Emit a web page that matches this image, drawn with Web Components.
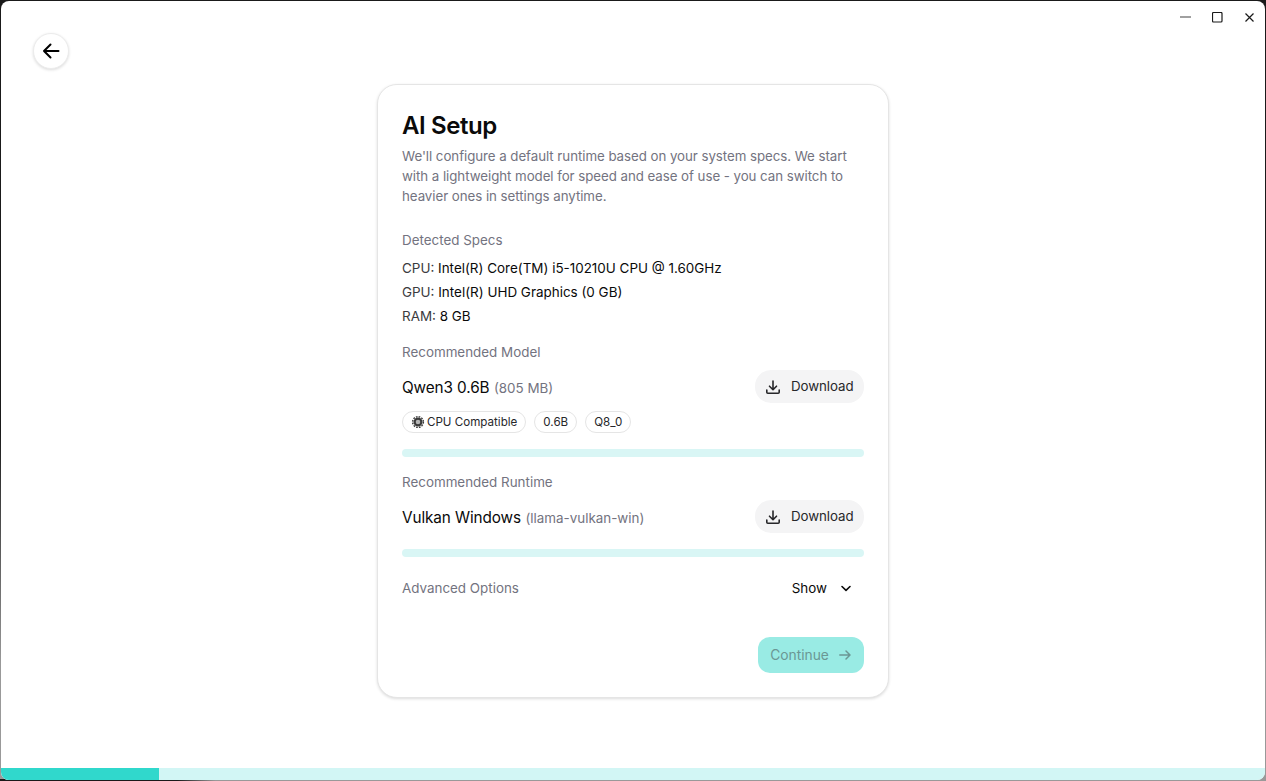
<!DOCTYPE html>
<html>
<head>
<meta charset="utf-8">
<title>AI Setup</title>
<style>
  html, body { margin: 0; height: 100%; overflow: hidden; }
  body {
    font-family: Inter, "Liberation Sans", sans-serif;
    background:
      linear-gradient(to right, #1a1a1a 14%, #999 17%) bottom / 100% 2px no-repeat,
      linear-gradient(#1a1a1a 55%, #999 85%);
  }
</style>
</head>
<body>
<app-window>
  <setup-card>
    <card-head title="AI Setup">We'll configure a default runtime based on your system specs. We start with a lightweight model for speed and ease of use - you can switch to heavier ones in settings anytime.</card-head>

    <section-label style="margin-top:24px">Detected Specs</section-label>
    <spec-line label="CPU:" style="margin-top:6px">Intel(R) Core(TM) i5-10210U CPU @ 1.60GHz</spec-line>
    <spec-line label="GPU:">Intel(R) UHD Graphics (0 GB)</spec-line>
    <spec-line label="RAM:">8 GB</spec-line>

    <section-label style="margin-top:14px">Recommended Model</section-label>
    <download-row name="Qwen3 0.6B" note="(805 MB)" style="margin-top:8px"></download-row>
    <chip-row>
      <info-chip icon>CPU Compatible</info-chip>
      <info-chip>0.6B</info-chip>
      <info-chip>Q8_0</info-chip>
    </chip-row>
    <thin-progress style="margin-top:16px"></thin-progress>

    <section-label style="margin-top:15px">Recommended Runtime</section-label>
    <download-row name="Vulkan Windows" note="(llama-vulkan-win)" style="margin-top:8px"></download-row>
    <thin-progress style="margin-top:16px"></thin-progress>

    <advanced-row></advanced-row>
    <continue-button></continue-button>
  </setup-card>
</app-window>

<script>
// Small helper so each element only declares its markup
function shadow(el, html) {
  el.attachShadow({ mode: 'open' })
  el.shadowRoot.innerHTML = html
}

class AppWindow extends HTMLElement {
  constructor() {
    super()
    shadow(this, `
      <style>
        :host {
          display: flex;
          flex-direction: column;
          box-sizing: border-box;
          height: 779px;
          margin: 1px 1px 0 1px;
          background: #fff;
          border-radius: 8px;
          overflow: hidden;
          position: relative;
          color: #0a0a0a;
        }
        .main {
          flex: 1;
          display: flex;
          justify-content: center;
          align-items: flex-start;
          padding: 83px 0 0 0;
        }
        .bar { height: 12px; background: #d2f6f5; }
        .bar div { width: 158px; height: 100%; background: #30d8cc; }
      </style>
      <window-controls></window-controls>
      <back-button></back-button>
      <div class="main"><slot></slot></div>
      <div class="bar"><div></div></div>
    `)
  }
}

class WindowControls extends HTMLElement {
  constructor() {
    super()
    shadow(this, `
      <style>
        :host { position: absolute; top: 11px; right: 10px; display: flex; gap: 21px; }
        svg { display: block; width: 11px; height: 11px; fill: none; stroke: #1a1a1a; stroke-width: 1; }
      </style>
      <svg viewBox="0 0 11 11"><path d="M0 5h11" stroke="#808080" stroke-width="1.4"/></svg>
      <svg viewBox="0 0 11 11"><rect x=".5" y=".5" width="9.500" height="9.500" rx="1" stroke-width="1.200"/></svg>
      <svg viewBox="0 0 11 11"><path d="M1.500 1.500l8 8M9.500 1.500l-8 8" stroke-width="1.200"/></svg>
    `)
  }
}

class BackButton extends HTMLElement {
  constructor() {
    super()
    shadow(this, `
      <style>
        :host {
          position: absolute;
          left: 32px;
          top: 32px;
          width: 36px;
          height: 36px;
          box-sizing: border-box;
          border-radius: 50%;
          border: 1px solid #ececec;
          background: #fff;
          box-shadow: 0 1px 3px rgba(0,0,0,.14);
          display: flex;
          align-items: center;
          justify-content: center;
        }
        svg { width: 20px; height: 20px; fill: none; stroke: #000; stroke-width: 2; stroke-linecap: round; stroke-linejoin: round; }
      </style>
      <svg viewBox="0 0 20 20"><path d="M17.500 10H3M9.500 3.500L3 10l6.500 6.500"/></svg>
    `)
  }
}

class SetupCard extends HTMLElement {
  constructor() {
    super()
    shadow(this, `
      <style>
        :host {
          display: flex;
          flex-direction: column;
          box-sizing: border-box;
          width: 512px;
          height: 614px;
          padding: 24px;
          background: #fff;
          border: 1px solid #e5e5e5;
          border-radius: 20px;
          box-shadow: 0 1px 3px rgba(0,0,0,.14);
        }
      </style>
      <slot></slot>
    `)
  }
}

class CardHead extends HTMLElement {
  constructor() {
    super()
    shadow(this, `
      <style>
        :host { display: block; padding-top: 1px; }
        h1 { margin: 0; font: 600 24px/32px Inter, sans-serif; letter-spacing: -.4px; }
        p { margin: 4px 0 0; font-size: 13.3px; line-height: 20px; color: #737380; letter-spacing: -.05px; }
      </style>
      <h1>${this.getAttribute('title')}</h1>
      <p><slot></slot></p>
    `)
  }
}

class SectionLabel extends HTMLElement {
  constructor() {
    super()
    shadow(this, `
      <style>
        :host { display: block; font-size: 13.4px; line-height: 20px; color: #737380; }
      </style>
      <slot></slot>
    `)
  }
}

class SpecLine extends HTMLElement {
  constructor() {
    super()
    shadow(this, `
      <style>
        :host { display: block; font-size: 13.450px; line-height: 24px; color: #0a0a0a; }
        span { color: #3b3b40; }
      </style>
      <span>${this.getAttribute('label')}</span> <slot></slot>
    `)
  }
}

class DownloadRow extends HTMLElement {
  constructor() {
    super()
    shadow(this, `
      <style>
        :host { display: flex; align-items: center; justify-content: space-between; height: 33px; }
        .name { font-size: 15.300px; letter-spacing: -.1px; }
        .note { font-size: 13.4px; color: #737380; }
        .btn {
          display: flex;
          align-items: center;
          gap: 10px;
          box-sizing: border-box;
          width: 109px;
          height: 33px;
          padding-left: 10px;
          border-radius: 16px;
          background: #f4f4f5;
          font-size: 13.3px;
          letter-spacing: -.05px;
          color: #27272a;
        }
        .btn span { position: relative; top: -1px; }
        svg { width: 16px; height: 16px; fill: none; stroke: #27272a; stroke-width: 1.600; stroke-linecap: round; stroke-linejoin: round; }
      </style>
      <div><span class="name">${this.getAttribute('name')}</span> <span class="note">${this.getAttribute('note')}</span></div>
      <div class="btn">
        <svg viewBox="0 0 16 16"><path d="M8 2v8.500M4.500 7.200L8 10.700l3.500-3.500M1.800 11v2.200c0 .6.4 1 1 1h10.400c.6 0 1-.4 1-1V11"/></svg>
        <span>Download</span>
      </div>
    `)
  }
}

class ChipRow extends HTMLElement {
  constructor() {
    super()
    shadow(this, `
      <style>
        :host { display: flex; gap: 8px; margin-top: 8px; }
      </style>
      <slot></slot>
    `)
  }
}

class InfoChip extends HTMLElement {
  constructor() {
    super()
    const icon = this.hasAttribute('icon') ? `
      <svg viewBox="0 0 14 14" fill="none" stroke="#3a3a3a">
        <circle cx="7" cy="7" r="3.400" fill="#b5b5b5" stroke-width="2.200"/>
        <circle cx="7" cy="7" r="5.400" stroke-width="1.400" stroke-dasharray="1.700 1.127"/>
      </svg>` : ''
    shadow(this, `
      <style>
        :host {
          display: flex;
          align-items: center;
          gap: 2px;
          box-sizing: border-box;
          height: 22px;
          padding: 0 8px;
          border: 1px solid #e5e5e5;
          border-radius: 11px;
          font-size: 11.600px;
          color: #27272a;
        }
        svg { width: 14px; height: 14px; }
      </style>
      ${icon}<slot></slot>
    `)
  }
}

class ThinProgress extends HTMLElement {
  constructor() {
    super()
    shadow(this, `
      <style>
        :host { display: block; height: 8px; border-radius: 4px; background: #d9f6f5; }
      </style>
    `)
  }
}

class AdvancedRow extends HTMLElement {
  constructor() {
    super()
    shadow(this, `
      <style>
        :host { display: flex; align-items: center; justify-content: space-between; margin-top: 21px; height: 20px; font-size: 13.4px; color: #737380; }
        .show { display: flex; align-items: center; gap: 12px; padding-right: 11px; color: #0a0a0a; }
        svg { width: 14px; height: 14px; fill: none; stroke: #0a0a0a; stroke-width: 1.600; stroke-linecap: round; stroke-linejoin: round; }
      </style>
      <span>Advanced Options</span>
      <span class="show">Show
        <svg viewBox="0 0 14 14"><path d="M3 5.500L7 9.300l4-3.800"/></svg>
      </span>
    `)
  }
}

class ContinueButton extends HTMLElement {
  constructor() {
    super()
    shadow(this, `
      <style>
        :host {
          display: flex;
          align-items: center;
          justify-content: center;
          gap: 9px;
          box-sizing: border-box;
          align-self: flex-end;
          width: 106px;
          height: 36px;
          margin-top: 39px;
          border-radius: 12px;
          background: #99ebe4;
          color: #6b9794;
          font-size: 13.800px;
        }
        svg { width: 14px; height: 14px; fill: none; stroke: #6b9794; stroke-width: 1.500; stroke-linecap: round; stroke-linejoin: round; }
      </style>
      <span>Continue</span>
      <svg viewBox="0 0 14 14"><path d="M1.800 7h10M8 3l4 4-4 4"/></svg>
    `)
  }
}

customElements.define('app-window', AppWindow)
customElements.define('window-controls', WindowControls)
customElements.define('back-button', BackButton)
customElements.define('setup-card', SetupCard)
customElements.define('card-head', CardHead)
customElements.define('section-label', SectionLabel)
customElements.define('spec-line', SpecLine)
customElements.define('download-row', DownloadRow)
customElements.define('chip-row', ChipRow)
customElements.define('info-chip', InfoChip)
customElements.define('thin-progress', ThinProgress)
customElements.define('advanced-row', AdvancedRow)
customElements.define('continue-button', ContinueButton)
</script>
</body>
</html>
